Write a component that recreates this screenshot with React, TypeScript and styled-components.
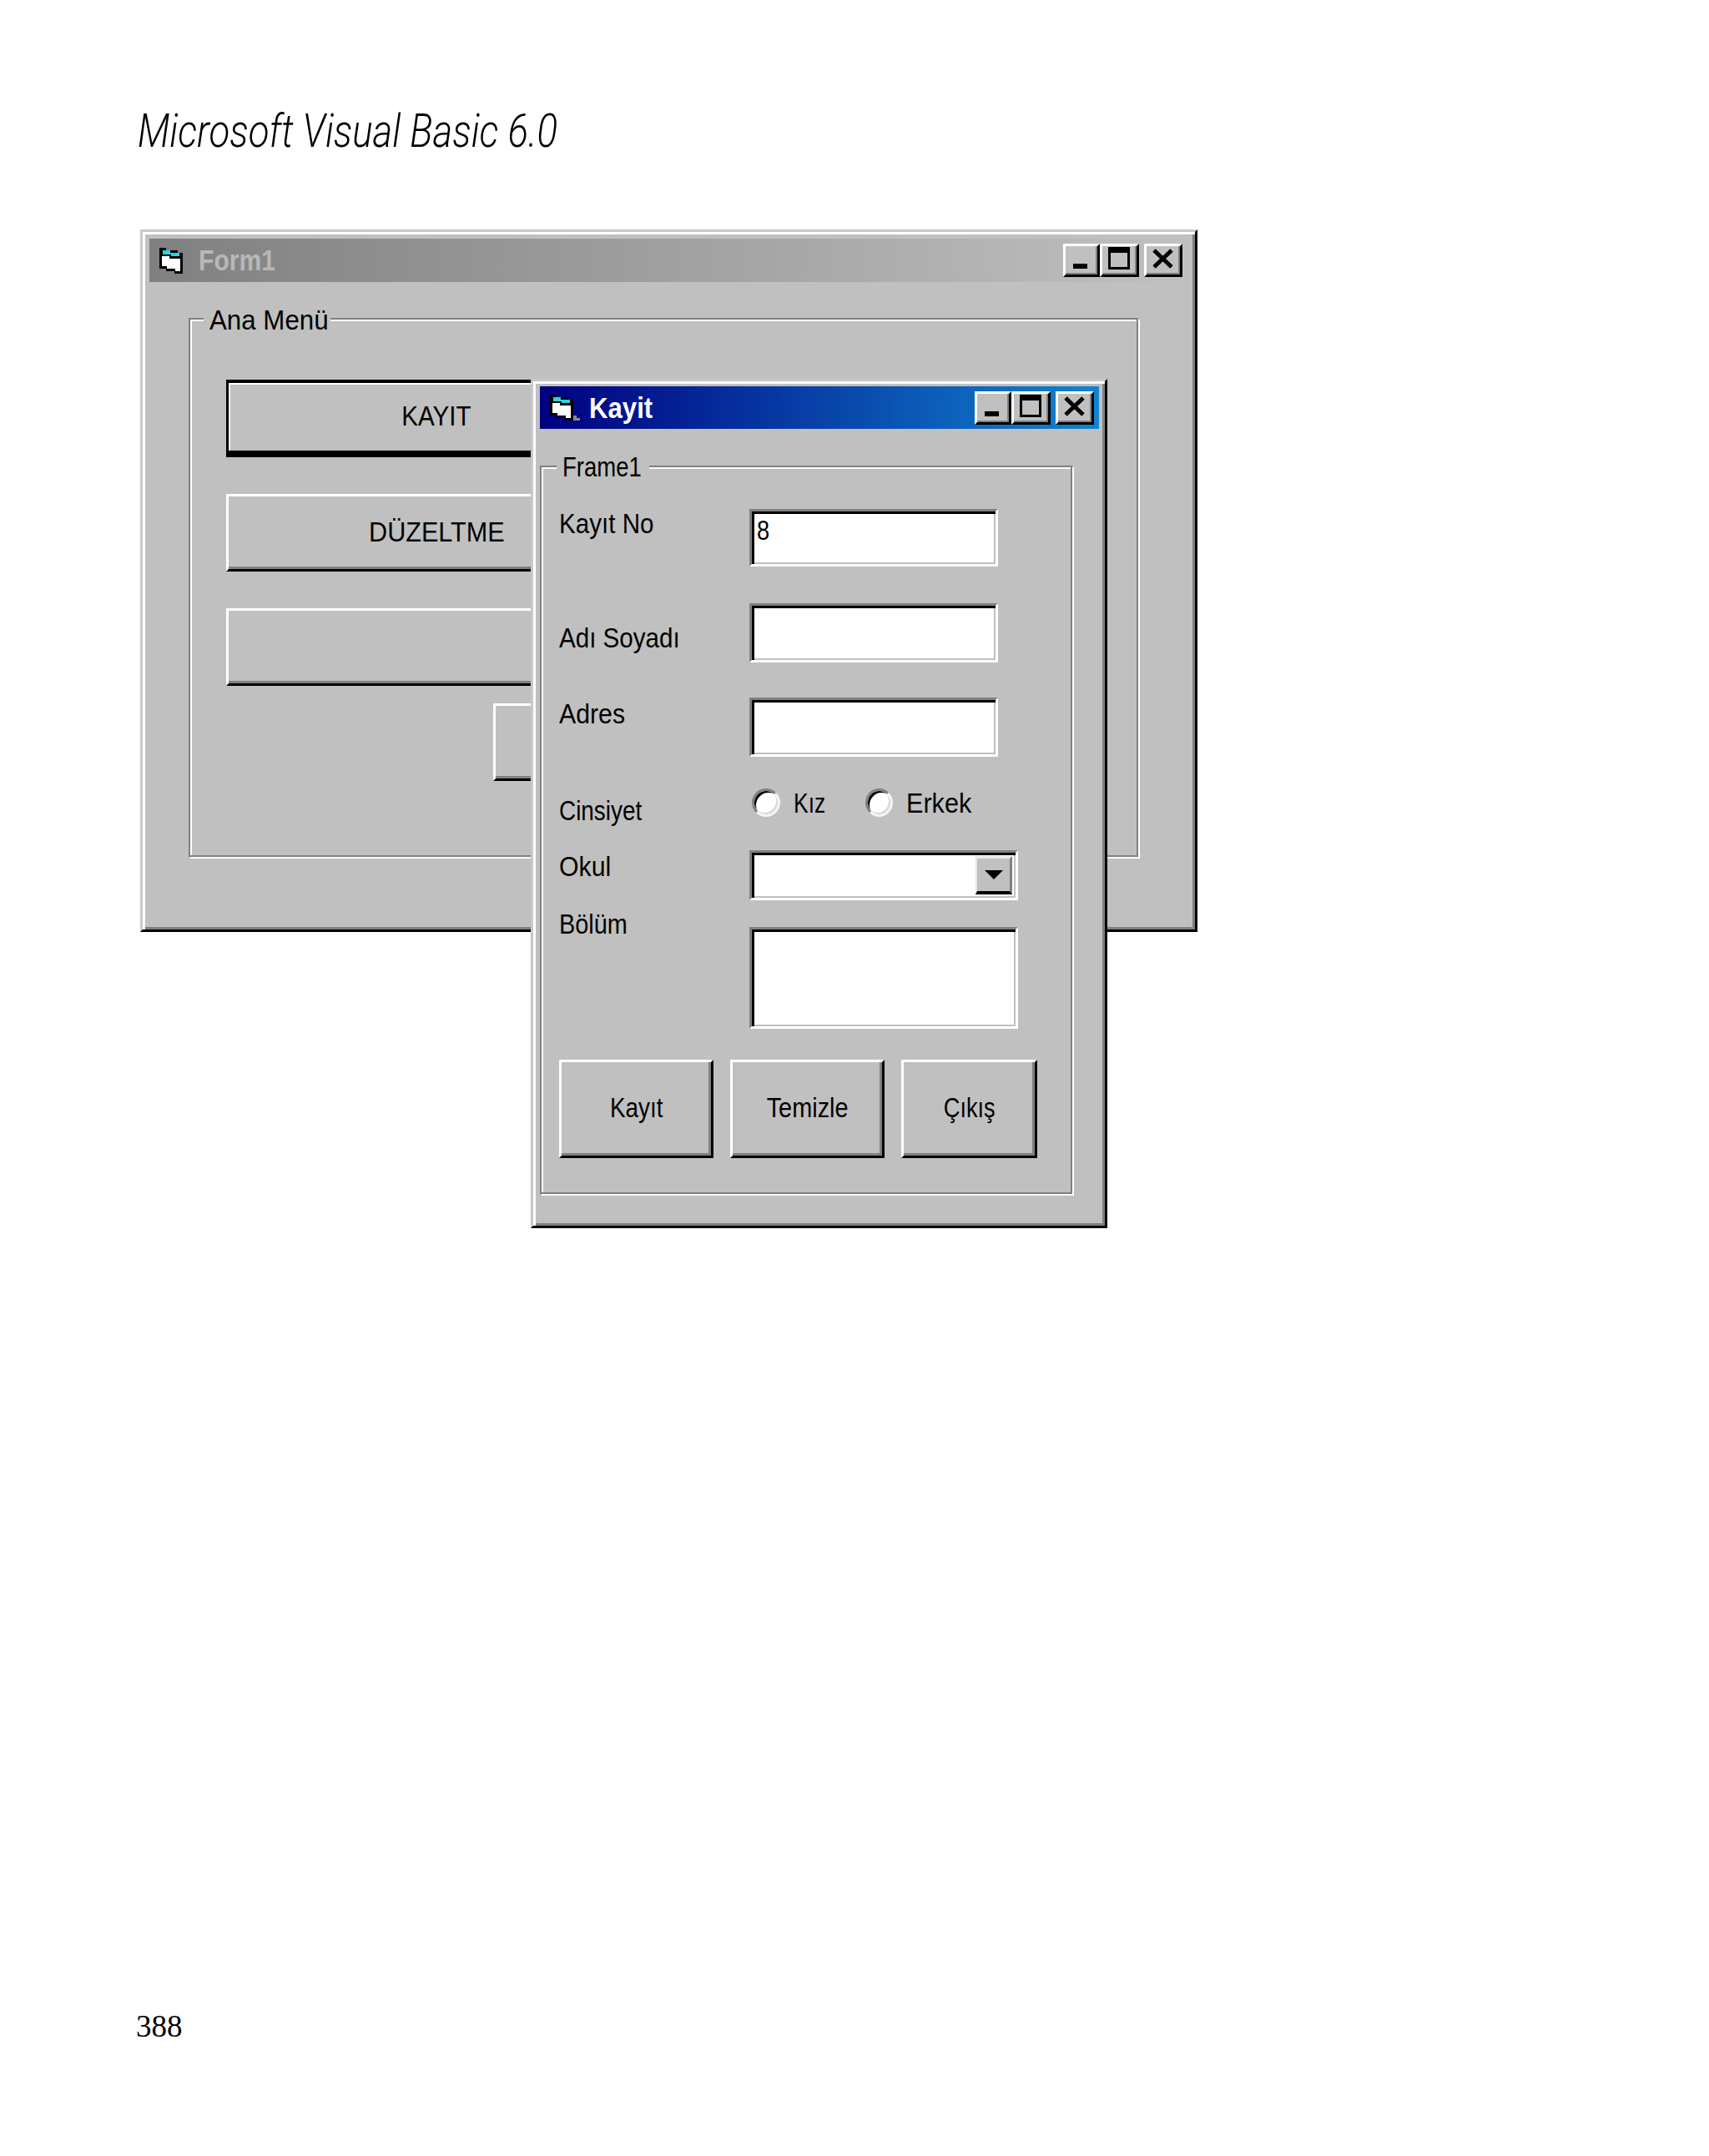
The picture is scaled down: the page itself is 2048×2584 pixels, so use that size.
import React from 'react';
import styled, { createGlobalStyle } from 'styled-components';

const GlobalStyle = createGlobalStyle`
    html, body {
        margin: 0;
        padding: 0;
        background: #fff;
    }
`;

const Page = styled.div`
    width: 2048px;
    height: 2584px;
    padding-left: 165px;
    box-sizing: border-box;
    overflow: hidden;
`;
const Heading = styled.h1`
    margin: 0;
    padding-top: 127px;
    height: 275px;
    box-sizing: border-box;
    font: italic 300 55px/60px 'Roboto', 'Liberation Sans', sans-serif;
    color: #000;
    transform: scaleX(0.83);
    transform-origin: left top;
    white-space: nowrap;
`;
const PageNumber = styled.div`
    margin: 937px 0 0 -2px;
    font: 400 37px/40px 'Liberation Serif', serif;
    color: #000;
`;
const Desktop = styled.div`
    position: relative;
    width: 1267px;
    height: 1197px;
    margin-left: 3px;
`;

const Win = styled.section<{ $w: number; $h: number; $over?: boolean }>`
    position: ${(p) => (p.$over ? 'absolute' : 'relative')};
    ${(p) => (p.$over ? 'left: 468px; top: 179px;' : '')}
    width: ${(p) => p.$w}px;
    height: ${(p) => p.$h}px;
    box-sizing: border-box;
    padding: ${(p) => (p.$over ? '6px 0 0 8px' : '8px 0 0 8px')};
    background: #c0c0c0;
    border-style: solid;
    border-width: 3px;
    border-color: #c8c8c8 #000 #000 #c8c8c8;
    box-shadow: inset 3px 3px 0 #fff, inset -3px -3px 0 #808080;
`;
const TitleBar = styled.header<{ $active?: boolean }>`
    display: flex;
    align-items: center;
    width: ${(p) => (p.$active ? 670 : 1246)}px;
    height: ${(p) => (p.$active ? 51 : 52)}px;
    padding: 0 ${(p) => (p.$active ? 6 : 8)}px 0 12px;
    box-sizing: border-box;
    background: ${(p) =>
        p.$active
            ? 'linear-gradient(90deg, #000080, #1084d0)'
            : 'linear-gradient(90deg, #808080, #c0c0c0)'};
`;
const TitleText = styled.span<{ $active?: boolean; $sx: number }>`
    display: inline-block;
    margin-left: 19px;
    font: 700 35px/34px 'Liberation Sans', sans-serif;
    color: ${(p) => (p.$active ? '#fff' : '#b8b8b8')};
    transform: scaleX(${(p) => p.$sx});
    transform-origin: left center;
`;
const ControlBox = styled.div`
    display: flex;
    margin-left: auto;
`;
const WinButton = styled.button<{ $w: number; $gap?: number }>`
    display: block;
    width: ${(p) => p.$w}px;
    height: 40px;
    margin: 0 0 0 ${(p) => p.$gap ?? 0}px;
    padding: 0;
    box-sizing: border-box;
    background: #c0c0c0;
    border-style: solid;
    border-width: 3px;
    border-color: #fff #000 #000 #fff;
    box-shadow: inset -2px -2px 0 #808080;
    svg {
        display: block;
    }
`;

const GroupBox = styled.div<{ $w: number; $h: number; $top: number; $left: number; $pad: string }>`
    position: relative;
    width: ${(p) => p.$w}px;
    height: ${(p) => p.$h}px;
    margin: ${(p) => p.$top}px 0 0 ${(p) => p.$left}px;
    padding: ${(p) => p.$pad};
    box-sizing: border-box;
    border: 2px solid #808080;
    box-shadow: inset 2px 2px 0 #fff, 2px 2px 0 #fff;
`;
const Legend = styled.span<{ $w: number; $top: number; $left: number }>`
    position: absolute;
    top: ${(p) => p.$top}px;
    left: ${(p) => p.$left}px;
    width: ${(p) => p.$w}px;
    padding-left: 7px;
    box-sizing: border-box;
    background: #c0c0c0;
`;
const Caption = styled.span<{ $sx: number; $center?: boolean }>`
    display: inline-block;
    font: 400 34px/34px 'Liberation Sans', sans-serif;
    color: #000;
    white-space: nowrap;
    transform: scaleX(${(p) => p.$sx});
    transform-origin: ${(p) => (p.$center ? 'center' : 'left')} center;
`;

const PushButton = styled.div<{ $w: number; $h: number; $default?: boolean; $left?: number; $top?: number }>`
    display: flex;
    align-items: center;
    justify-content: center;
    width: ${(p) => p.$w}px;
    height: ${(p) => p.$h}px;
    margin: ${(p) => p.$top ?? 0}px 0 0 ${(p) => p.$left ?? 0}px;
    padding-bottom: 4px;
    box-sizing: border-box;
    background: #c0c0c0;
    border-style: solid;
    border-width: 3px;
    border-color: #fff #000 #000 #fff;
    box-shadow: inset -3px -3px 0 #808080;
    ${(p) =>
        p.$default
            ? `border-color: #000;
               border-width: 4px 3px 8px 3px;
               box-shadow: inset 2px 2px 0 #fff;`
            : ''}
`;
const MenuColumn = styled.div`
    display: flex;
    flex-direction: column;
    gap: 44px;
`;

const Row = styled.div<{ $gap?: number }>`
    display: grid;
    grid-template-columns: 228px 1fr;
    align-items: start;
    margin-top: ${(p) => p.$gap ?? 0}px;
`;
const FieldLabel = styled.div<{ $offset: number }>`
    height: 34px;
    margin-top: ${(p) => p.$offset}px;
    margin-bottom: ${(p) => -p.$offset}px;
`;
const Sunken = styled.div<{ $w: number; $h: number }>`
    display: flex;
    justify-content: flex-end;
    width: ${(p) => p.$w}px;
    height: ${(p) => p.$h}px;
    box-sizing: border-box;
    padding: 4px 4px 4px 6px;
    background: #fff;
    border-style: solid;
    border-width: 3px;
    border-color: #808080 #fff #fff #808080;
    box-shadow: inset 3px 3px 0 #000, inset -2px -2px 0 #c0c0c0;
`;
const InputValue = styled.span`
    margin: 1px auto 0 0;
    font: 400 34px/34px 'Liberation Sans', sans-serif;
    color: #000;
    transform: scaleX(0.8);
    transform-origin: left center;
`;
const DropButton = styled.div`
    display: flex;
    align-items: center;
    justify-content: center;
    width: 44px;
    height: 46px;
    box-sizing: border-box;
    background: #c0c0c0;
    border-style: solid;
    border-width: 3px 3px 4px 2px;
    border-color: #e8e8e8 #808080 #000 #e8e8e8;
`;
const DropArrow = styled.i`
    display: block;
    width: 0;
    height: 0;
    border-style: solid;
    border-width: 11px 11px 0 11px;
    border-color: #000 transparent transparent transparent;
`;
const RadioRow = styled.div`
    display: flex;
    padding-left: 3px;
`;
const RadioOption = styled.label<{ $w: number }>`
    display: flex;
    align-items: flex-start;
    gap: 16px;
    width: ${(p) => p.$w}px;
`;
const RadioDot = styled.span`
    display: block;
    width: 34px;
    height: 34px;
    box-sizing: border-box;
    border-radius: 50%;
    background: #fff;
    border: 3px solid;
    border-color: #808080 #f4f4f4 #f4f4f4 #808080;
    box-shadow: inset 3px 3px 0 -1px #000, inset -2px -2px 0 #d8d8d8;
`;
const ButtonRow = styled.div`
    display: flex;
    gap: 20px;
    margin-top: 37px;
`;

function FolderIcon({ tail }: { tail?: boolean }): JSX.Element {
    return (
        <svg width="36" height="31" viewBox="0 0 36 31" shapeRendering="crispEdges" style={{ flex: 'none', marginRight: -8 }}>
            <path d="M0 0H8V3H22V6H28V31H18V28H8V25H0Z" fill="#000" />
            <path d="M4 3H13V6H24V10H14V8H4Z" fill="#22d8dc" />
            <path d="M3 10H12V13H25V28H19V25H9V22H3Z" fill="#fff" />
            {tail && <path d="M28 25H32V28H36V31H28Z" fill="#8a8a8a" />}
        </svg>
    );
}

function Controls(): JSX.Element {
    return (
        <ControlBox>
            <WinButton $w={44}>
                <svg width="38" height="34" viewBox="0 0 38 34">
                    <rect x="9" y="21" width="17" height="6" fill="#000" />
                </svg>
            </WinButton>
            <WinButton $w={47}>
                <svg width="41" height="34" viewBox="0 0 41 34">
                    <path d="M7 1H33V28H7ZM10 8V25H30V8Z" fillRule="evenodd" fill="#000" />
                </svg>
            </WinButton>
            <WinButton $w={46} $gap={6}>
                <svg width="40" height="34" viewBox="0 0 40 34">
                    <path d="M9 5L30 25M30 5L9 25" stroke="#000" strokeWidth="5" />
                </svg>
            </WinButton>
        </ControlBox>
    );
}

function App(): JSX.Element {
    return (
        <Page>
            <GlobalStyle />
            <Heading>Microsoft Visual Basic 6.0</Heading>
            <Desktop>
                <Win $w={1267} $h={842}>
                    <TitleBar>
                        <FolderIcon />
                        <TitleText $sx={0.86}>Form1</TitleText>
                        <Controls />
                    </TitleBar>
                    <GroupBox $w={1138} $h={646} $top={43} $left={47} $pad="72px 0 0 43px">
                        <Legend $w={152} $top={-17} $left={16}>
                            <Caption $sx={0.92}>Ana Menü</Caption>
                        </Legend>
                        <MenuColumn>
                            <PushButton $w={504} $h={93} $default>
                                <Caption $sx={0.87} $center>KAYIT</Caption>
                            </PushButton>
                            <PushButton $w={504} $h={93}>
                                <Caption $sx={0.9} $center>DÜZELTME</Caption>
                            </PushButton>
                            <PushButton $w={504} $h={93} />
                            <PushButton $w={184} $h={93} $left={320} $top={-23} />
                        </MenuColumn>
                    </GroupBox>
                </Win>
                <Win $w={691} $h={1018} $over>
                    <TitleBar $active>
                        <FolderIcon tail />
                        <TitleText $active $sx={0.89}>Kayit</TitleText>
                        <Controls />
                    </TitleBar>
                    <GroupBox $w={638} $h={873} $top={44} $left={0} $pad="50px 0 0 21px">
                        <Legend $w={111} $top={-18} $left={18}>
                            <Caption $sx={0.81}>Frame1</Caption>
                        </Legend>
                        <Row>
                            <FieldLabel $offset={0}><Caption $sx={0.87}>Kayıt No</Caption></FieldLabel>
                            <Sunken $w={298} $h={69}><InputValue>8</InputValue></Sunken>
                        </Row>
                        <Row $gap={44}>
                            <FieldLabel $offset={24}><Caption $sx={0.87}>Adı Soyadı</Caption></FieldLabel>
                            <Sunken $w={298} $h={71} />
                        </Row>
                        <Row $gap={42}>
                            <FieldLabel $offset={2}><Caption $sx={0.89}>Adres</Caption></FieldLabel>
                            <Sunken $w={298} $h={71} />
                        </Row>
                        <Row $gap={38}>
                            <FieldLabel $offset={9}><Caption $sx={0.82}>Cinsiyet</Caption></FieldLabel>
                            <RadioRow>
                                <RadioOption $w={136}>
                                    <RadioDot />
                                    <Caption $sx={0.78}>Kız</Caption>
                                </RadioOption>
                                <RadioOption $w={136}>
                                    <RadioDot />
                                    <Caption $sx={0.9}>Erkek</Caption>
                                </RadioOption>
                            </RadioRow>
                        </Row>
                        <Row $gap={40}>
                            <FieldLabel $offset={2}><Caption $sx={0.89}>Okul</Caption></FieldLabel>
                            <Sunken $w={322} $h={60}>
                                <DropButton><DropArrow /></DropButton>
                            </Sunken>
                        </Row>
                        <Row $gap={32}>
                            <FieldLabel $offset={-21}><Caption $sx={0.85}>Bölüm</Caption></FieldLabel>
                            <Sunken $w={322} $h={122} />
                        </Row>
                        <ButtonRow>
                            <PushButton $w={185} $h={118}><Caption $sx={0.82} $center>Kayıt</Caption></PushButton>
                            <PushButton $w={185} $h={118}><Caption $sx={0.85} $center>Temizle</Caption></PushButton>
                            <PushButton $w={163} $h={118}><Caption $sx={0.8} $center>Çıkış</Caption></PushButton>
                        </ButtonRow>
                    </GroupBox>
                </Win>
            </Desktop>
            <PageNumber>388</PageNumber>
        </Page>
    );
}

export default App;
